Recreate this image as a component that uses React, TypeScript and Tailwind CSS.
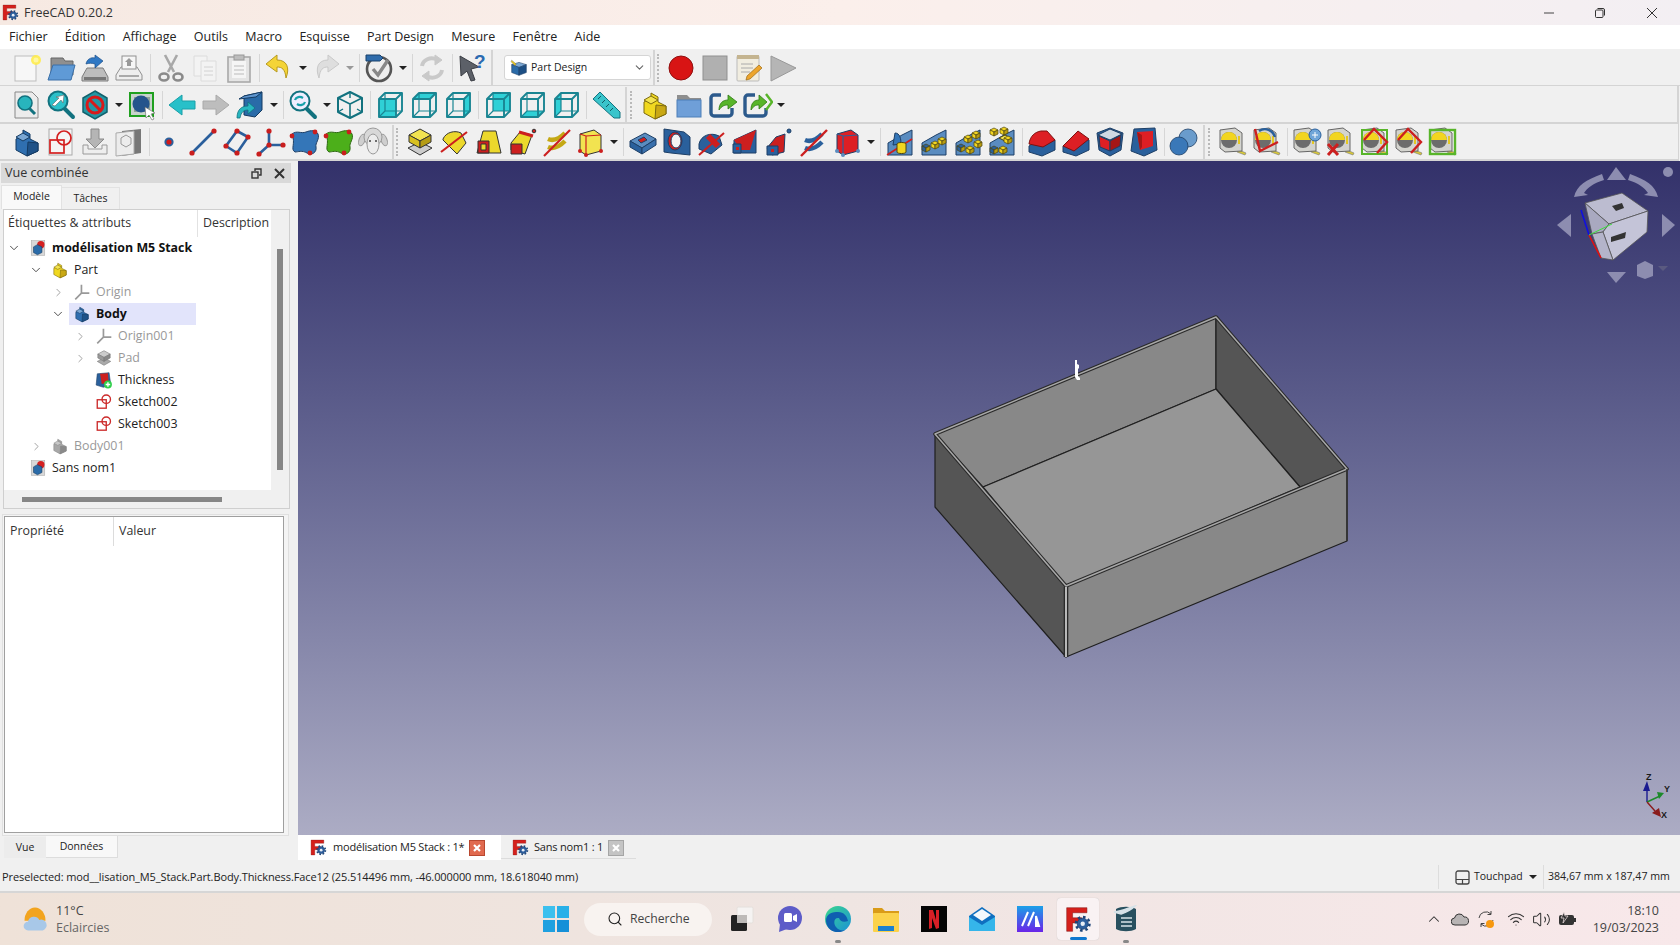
import type { ReactNode } from 'react';
import { ChevronDown, ChevronRight, ChevronUp, Search, Volume2, Wifi } from 'lucide-react';

const step = (a: string, b: string, c: string, s: string) => (
  <g stroke={s} strokeWidth="1" strokeLinejoin="round">
    <polygon points="5,13 12,9 12,4 19,8 19,13 27,17 27,25 16,30 5,24" fill={b} />
    <polygon points="12,4 19,8 12,12 5,8" fill={a} transform="translate(0 3)" />
    <polygon points="17,16 27,17 27,25 16,30" fill={c} />
  </g>
);

const wire = (face: string) => {
  const faces: Record<string, string> = {
    front: '5,10 22,10 22,28 5,28',
    top: '5,10 11,4 28,4 22,10',
    right: '22,10 28,4 28,22 22,28',
    rear: '11,4 28,4 28,22 11,22',
    bottom: '5,28 11,22 28,22 22,28',
    left: '5,10 11,4 11,22 5,28',
  };
  return (
    <g fill="none" stroke="#1a8592" strokeWidth="1.9" strokeLinejoin="round">
      {faces[face] && <polygon points={faces[face]} fill="#2fd0d6" stroke="none" />}
      <polygon points="5,10 11,4 28,4 28,22 22,28 5,28" />
      <path d="M5 10H22V28M22 10L28 4" />
      <path d="M11 4V22H28M11 22L5 28" strokeWidth="1.2" />
    </g>
  );
};

const tape = (extra?: ReactNode) => (
  <g>
    <path d="M22 24l7 3-1 2-8-3z" fill="#d8c838" stroke="#777" strokeWidth=".6" />
    <polygon points="3,4 18,2 25,7 25,25 8,26 3,22" fill="#d4d4cf" stroke="#666" />
    <circle cx="12" cy="14" r="8" fill="#6c6c6c" />
    <path d="M4 14a8 8 0 0 1 16 0z" fill="#f2d520" />
    <rect x="21" y="10" width="2" height="8" fill="#e5c820" />
    {extra}
  </g>
);

const magnifier = (fill: string, inner?: ReactNode) => (
  <g>
    <path d="M19 19l9 9" stroke="#12727f" strokeWidth="4" strokeLinecap="round" />
    <circle cx="13" cy="12" r="9.5" fill={fill} stroke="#12727f" strokeWidth="2" />
    {inner}
  </g>
);

const sketchShape = (
  <g fill="none" stroke="#cc2a2a" strokeWidth="2.4">
    <rect x="4" y="12" width="16" height="15" fill="#fff" />
    <circle cx="20" cy="11" r="7.5" />
  </g>
);

const docIcon = (
  <g>
    <rect x="4" y="3" width="24" height="26" fill="#d8d8d8" stroke="#aaa" />
    <circle cx="21" cy="10" r="6.5" fill="#d42020" />
    <polygon points="15,10 23,14 23,24 15,28 8,24 8,14" fill="#2a6ba8" stroke="#163a5f" />
  </g>
);

const bluePat = (inner: ReactNode) => (
  <g>
    <polygon points="4,29 4,17 18,9 28,4 28,29" fill="#5a8cc0" stroke="#1d3f66" />
    {inner}
  </g>
);

const yc = (x: number, y: number, c = '#f2d520') => (
  <g transform={`translate(${x} ${y})`} stroke="#4a4410" strokeWidth=".7">
    <polygon points="0,2 4,0 8,2 4,4" fill={c} />
    <polygon points="0,2 4,4 4,8 0,6" fill={c} />
    <polygon points="8,2 4,4 4,8 8,6" fill="#b89c10" />
  </g>
);

const redBlue = (inner: ReactNode) => (
  <g stroke="#1d3f66" strokeLinejoin="round">
    <polygon points="3,20 18,10 29,14 29,24 16,30 3,26" fill="#2a609c" />
    {inner}
  </g>
);

const icons: Record<string, ReactNode> = {
  new: (
    <g>
      <rect x="4" y="4" width="21" height="25" fill="#f7f7f7" stroke="#bdbdbd" />
      <circle cx="25" cy="8" r="5" fill="#ffec4d" opacity=".9" />
      <circle cx="25" cy="8" r="2.5" fill="#fff7a0" />
    </g>
  ),
  open: (
    <g>
      <path d="M6 6h12l2 3h8v14H6z" fill="#8f8f8f" stroke="#666" />
      <polygon points="8,13 30,13 26,28 3,28" fill="#5f9ad6" stroke="#3a6fa8" />
    </g>
  ),
  save: (
    <g>
      <polygon points="8,16 24,16 29,25 29,29 3,29 3,25" fill="#bdbdbd" stroke="#7d7d7d" />
      <rect x="5" y="25" width="22" height="3" fill="#777" />
      <path d="M7 12c1-5 5-7 9-6V3l8 6-8 7v-4c-3-1-6-1-9 0z" fill="#2f78c4" stroke="#1d4f88" strokeWidth=".7" />
    </g>
  ),
  print: (
    <g stroke="#909090" fill="#eee">
      <polygon points="8,15 24,15 29,23 29,28 3,28 3,23" />
      <rect x="9" y="4" width="14" height="13" fill="#f6f6f6" />
      <rect x="6" y="23" width="20" height="2" fill="#aaa" stroke="none" />
      <path d="M16 6l4 4h-2v4h-4v-4h-2z" fill="#999" stroke="none" />
    </g>
  ),
  cut: (
    <g fill="none" stroke="#a8a8a8" strokeWidth="2.6">
      <path d="M10 3l9 17M22 3l-9 17" />
      <ellipse cx="9" cy="25" rx="4.5" ry="3.5" stroke="#8a8a8a" />
      <ellipse cx="23" cy="25" rx="4.5" ry="3.5" stroke="#8a8a8a" />
    </g>
  ),
  copy: (
    <g fill="#f3f3f3" stroke="#dcdcdc">
      <path d="M5 4h13v20H5z" />
      <path d="M12 9h15v20H12z" />
      <path d="M15 15h9M15 19h9M15 23h9" stroke="#d2d2d2" />
    </g>
  ),
  paste: (
    <g>
      <rect x="5" y="5" width="22" height="25" fill="#e4e4e4" stroke="#a9a9a9" strokeWidth="1.6" />
      <rect x="9" y="9" width="14" height="17" fill="#f5f5f5" />
      <rect x="11" y="3" width="10" height="5" fill="#bdbdbd" stroke="#999" />
      <path d="M11 14h10M11 18h10M11 22h10" stroke="#bbb" />
    </g>
  ),
  undo: <path d="M14 3L3 12l11 8v-5c5 0 8 2 9 11 4-10 1-18-9-18z" fill="#f4d437" stroke="#b79a20" strokeLinejoin="round" />,
  redo: <path d="M18 3l11 9-11 8v-5c-5 0-8 2-9 11-4-10-1-18 9-18z" fill="#dedede" stroke="#c9c9c9" strokeLinejoin="round" />,
  check: (
    <g>
      <circle cx="16" cy="17" r="12" fill="#eee" stroke="#555" strokeWidth="2.6" />
      <path d="M10 17l5 6 10-15" fill="none" stroke="#888" strokeWidth="3.4" />
      <path d="M3 3h14l3 3-3 3H3z" fill="#2f6cab" stroke="#19406b" />
    </g>
  ),
  refresh: (
    <g fill="none" stroke="#c9c9c9" strokeWidth="4">
      <path d="M6 14c1-6 8-10 16-6" />
      <path d="M26 18c-1 6-8 10-16 6" />
      <path d="M19 3l7 5-7 5z" fill="#c9c9c9" strokeWidth="1" />
      <path d="M13 19l-7 5 7 5z" fill="#c9c9c9" strokeWidth="1" />
    </g>
  ),
  help: (
    <g>
      <polygon points="4,4 23,15 15,17 19,28 15,29 11,19 5,24" fill="#5c6068" stroke="#3a3d44" />
      <text x="18" y="16" fontSize="19" fontWeight="700" fill="#2b6ab0" fontFamily="Liberation Sans">?</text>
    </g>
  ),
  pd: (
    <g>
      <polygon points="16,6 29,10 16,15 3,10" fill="#7aa7d4" stroke="#1d3f66" />
      <polygon points="3,10 16,15 16,29 3,24" fill="#2a6ba8" stroke="#1d3f66" />
      <polygon points="29,10 16,15 16,29 29,24" fill="#1d4f84" stroke="#1d3f66" />
      <path d="M3 2l8 7-2 3-7-7z" fill="#e8c820" stroke="#555" strokeWidth=".6" />
    </g>
  ),
  rec: <circle cx="16" cy="16" r="12" fill="#d81414" stroke="#8f1010" />,
  stop: <rect x="4" y="4" width="24" height="24" fill="#b0b0b0" stroke="#8f8f8f" />,
  note: (
    <g>
      <rect x="4" y="4" width="22" height="25" rx="1" fill="#f1ede0" stroke="#bbb" />
      <rect x="4" y="3" width="22" height="4" fill="#c4b490" />
      <path d="M8 12h12M8 16h12M8 20h9" stroke="#aaa" />
      <path d="M14 24l12-11 3 3-12 11-4 1z" fill="#eda52c" stroke="#9c6a14" strokeWidth=".7" />
    </g>
  ),
  play: <polygon points="4,4 29,16 4,29" fill="#b5b5b5" stroke="#999" />,
  fitall: (
    <g>
      <path d="M4 3h17l6 6v20H4z" fill="#ececec" stroke="#888" />
      <circle cx="14" cy="14" r="7" fill="#28b4bd" stroke="#12727f" strokeWidth="1.6" />
      <path d="M18 19l6 6" stroke="#12727f" strokeWidth="3" />
    </g>
  ),
  fitsel: magnifier('#2bc0c9', <path d="M7 16l7-7-3-1 8-2-1 8-2-3-6 6z" fill="#fff" stroke="#666" strokeWidth=".6" />),
  draw: (
    <g>
      <polygon points="16,2 28,9 28,23 16,30 4,23 4,9" fill="#2497a4" stroke="#12626d" strokeWidth="1.5" />
      <circle cx="16" cy="16" r="8" fill="none" stroke="#d81a1a" strokeWidth="3" />
      <path d="M10 10l12 12" stroke="#d81a1a" strokeWidth="3" />
    </g>
  ),
  boxsel: (
    <g>
      <rect x="4" y="4" width="23" height="23" fill="#c8d4cc" stroke="#1fa01f" strokeWidth="2" />
      <polygon points="8,8 24,8 24,23 8,23" fill="#8fa098" />
      <circle cx="15" cy="15" r="8.5" fill="#25548c" />
      <path d="M19 18l10 6-4 1 3 5-2 1-3-5-3 3z" fill="#fff" stroke="#666" strokeWidth=".6" />
    </g>
  ),
  left: <polygon points="3,16 16,6 16,12 29,12 29,20 16,20 16,26" fill="#28c0c9" stroke="#1aa0a8" />,
  right: <polygon points="29,16 16,6 16,12 3,12 3,20 16,20 16,26" fill="#bdbdbd" stroke="#aaa" />,
  boxarrow: (
    <g>
      <polygon points="10,7 28,3 28,21 21,28 10,26" fill="#2a6ba8" stroke="#153b62" />
      <polygon points="10,7 28,3 22,8 5,10" fill="#5f96cf" stroke="#153b62" />
      <path d="M3 29c0-9 5-12 11-12v-4l7 6-7 6v-4c-4 0-7 2-8 8z" fill="#27b6c0" stroke="#12727f" strokeWidth=".8" />
    </g>
  ),
  zoomsync: magnifier('#eef', <g fill="none" stroke="#16a0aa" strokeWidth="2.2"><path d="M8 11c1-3 5-4 8-2" /><path d="M18 13c-1 3-5 4-8 2" /></g>),
  iso: (
    <g fill="none" stroke="#12727f" strokeWidth="2" strokeLinejoin="round">
      <polygon points="16,3 28,9 28,23 16,29 4,23 4,9" />
      <path d="M4 9l12 6 12-6M16 15v14" strokeWidth="1.6" />
      <path d="M16 3v6M4 23l5-3M28 23l-5-3" strokeWidth="1.4" />
    </g>
  ),
  vfront: wire('front'),
  vtop: wire('top'),
  vright: wire('right'),
  vrear: wire('rear'),
  vbottom: wire('bottom'),
  vleft: wire('left'),
  ruler: (
    <g>
      <polygon points="3,10 10,3 30,23 30,29 24,29" fill="#39c4cb" stroke="#12727f" />
      <path d="M8 10l3-3M12 14l3-3M16 18l3-3M20 22l3-3" stroke="#0f5c66" />
    </g>
  ),
  part: step('#f2e350', '#f0d820', '#c9a814', '#7c6a10'),
  folder: (
    <g>
      <path d="M4 6h10l3 3h11v4H4z" fill="#8e8e8e" />
      <rect x="4" y="11" width="24" height="17" fill="#6f9fd8" stroke="#4d7fb8" />
    </g>
  ),
  link: (
    <g>
      <path d="M14 6H7a3 3 0 0 0-3 3v15a3 3 0 0 0 3 3h15a3 3 0 0 0 3-3v-5" fill="none" stroke="#2c5a8c" strokeWidth="3.4" />
      <path d="M12 21c0-7 4-10 9-10V6l9 7-9 7v-4c-4 0-6 1-9 5z" fill="#58b52a" stroke="#2f7a12" strokeWidth=".8" />
    </g>
  ),
  linkmore: (
    <g>
      <path d="M14 6H7a3 3 0 0 0-3 3v15a3 3 0 0 0 3 3h15a3 3 0 0 0 3-3v-5" fill="none" stroke="#2c5a8c" strokeWidth="3.4" />
      <path d="M10 21c0-7 3-10 8-10V6l8 7-8 7v-4c-4 0-5 1-8 5z" fill="#58b52a" stroke="#2f7a12" strokeWidth=".8" />
      <path d="M25 5l6 8-6 8" fill="none" stroke="#58b52a" strokeWidth="2.4" />
    </g>
  ),
  body: step('#7aa7d4', '#2f6fb0', '#1f5288', '#153b62'),
  bodygrey: step('#c8c8c8', '#a8a8a8', '#8a8a8a', '#888'),
  sketch: (
    <g>
      <rect x="4" y="3" width="23" height="26" fill="#f5f5f5" stroke="#aaa" />
      <g fill="none" stroke="#d42020" strokeWidth="1.7">
        <rect x="5" y="14" width="14" height="13" />
        <circle cx="19" cy="12" r="7" />
      </g>
    </g>
  ),
  sketchT: sketchShape,
  import: (
    <g>
      <path d="M4 19v9h24v-9h-5v4H9v-4z" fill="#eee" stroke="#999" />
      <path d="M12 3h8v10h5l-9 9-9-9h5z" fill="#b5b5b5" stroke="#8a8a8a" />
    </g>
  ),
  clonegrey: (
    <g>
      <polygon points="9,5 28,3 28,27 9,30" fill="#777" />
      <polygon points="3,7 21,5 21,28 3,30" fill="#ececec" stroke="#aaa" />
      <path d="M8 12l5-3 5 3v6l-5 3-5-3z" fill="none" stroke="#999" />
    </g>
  ),
  point: <circle cx="16" cy="16" r="3.6" fill="#d11a1a" stroke="#2a609c" strokeWidth="2" />,
  line: (
    <g>
      <path d="M5 27L27 5" stroke="#2a5f9c" strokeWidth="2.6" />
      <circle cx="5" cy="27" r="2.6" fill="#c91e1e" />
      <circle cx="27" cy="5" r="2.6" fill="#c91e1e" />
    </g>
  ),
  plane: (
    <g>
      <polygon points="16,5 27,11 16,27 5,20" fill="none" stroke="#2a5f9c" strokeWidth="2.6" />
      <circle cx="16" cy="5" r="2.6" fill="#c91e1e" />
      <circle cx="27" cy="11" r="2.6" fill="#c91e1e" />
      <circle cx="16" cy="27" r="2.6" fill="#c91e1e" />
      <circle cx="5" cy="20" r="2.6" fill="#c91e1e" />
    </g>
  ),
  lcs: (
    <g>
      <path d="M14 5v14M14 19H27M14 19L4 28" stroke="#2a5f9c" strokeWidth="2.6" />
      <circle cx="14" cy="5" r="2.6" fill="#c91e1e" />
      <circle cx="28" cy="19" r="2.6" fill="#c91e1e" />
      <circle cx="4" cy="28" r="2.6" fill="#c91e1e" />
      <circle cx="14" cy="19" r="2.6" fill="#c91e1e" />
    </g>
  ),
  binder: (
    <g>
      <path d="M3 8c5-4 9 0 14-2 5-2 10-2 12 2 2 5-3 9-2 13 1 5-4 9-9 6-5-3-9-1-12-1-5-3 1-8-3-18z" fill="#3476b8" stroke="#1d3f66" />
      <circle cx="26" cy="6" r="2.4" fill="#c91e1e" />
      <circle cx="3" cy="10" r="2.4" fill="#c91e1e" />
      <circle cx="21" cy="27" r="2.4" fill="#c91e1e" />
    </g>
  ),
  subshape: (
    <g>
      <path d="M3 8c5-4 9 0 14-2 5-2 10-2 12 2 2 5-3 9-2 13 1 5-4 9-9 6-5-3-9-1-12-1-5-3 1-8-3-18z" fill="#4caf1a" stroke="#2c6a10" />
      <circle cx="26" cy="6" r="2.4" fill="#c91e1e" />
      <circle cx="3" cy="10" r="2.4" fill="#c91e1e" />
      <circle cx="21" cy="27" r="2.4" fill="#c91e1e" />
    </g>
  ),
  sheep: (
    <g stroke="#9a9a9a">
      <ellipse cx="5" cy="14" rx="3" ry="6" fill="#cfcfcf" transform="rotate(20 5 14)" />
      <ellipse cx="27" cy="14" rx="3" ry="6" fill="#cfcfcf" transform="rotate(-20 27 14)" />
      <circle cx="16" cy="11" r="9" fill="#d8d8d8" />
      <ellipse cx="16" cy="18" rx="6" ry="10" fill="#ececec" />
      <circle cx="13" cy="15" r="1" fill="#444" stroke="none" />
      <circle cx="19" cy="15" r="1" fill="#444" stroke="none" />
    </g>
  ),
  pad: (
    <g stroke="#333" strokeLinejoin="round">
      <polygon points="4,22 16,16 28,22 16,29" fill="#ccc" />
      <polygon points="5,9 16,3 27,9 16,15" fill="#f2e350" />
      <polygon points="5,9 16,15 16,22 5,16" fill="#d8c020" />
      <polygon points="27,9 16,15 16,22 27,16" fill="#b59c14" />
    </g>
  ),
  padgrey: (
    <g stroke="#777" strokeLinejoin="round">
      <polygon points="4,22 16,16 28,22 16,29" fill="#aaa" />
      <polygon points="5,9 16,3 27,9 16,15" fill="#ccc" />
      <polygon points="5,9 16,15 16,22 5,16" fill="#999" />
      <polygon points="27,9 16,15 16,22 27,16" fill="#888" />
    </g>
  ),
  revolve: (
    <g>
      <path d="M5 13c3-7 12-9 18-6l5 10-9 11-14-14z" fill="#ecd82c" stroke="#333" />
      <path d="M3 26L29 6" stroke="#cc1f1f" strokeWidth="2.2" />
    </g>
  ),
  loft: (
    <g stroke="#333" strokeLinejoin="round">
      <polygon points="11,5 24,5 29,27 5,27" fill="#ecd82c" />
      <rect x="6" y="15" width="11" height="12" fill="#cc1f1f" />
      <rect x="9" y="18" width="5" height="6" fill="#ecd82c" />
    </g>
  ),
  pipe: (
    <g stroke="#333" strokeLinejoin="round">
      <path d="M5 17l9-11 12 3-7 19-14-4z" fill="#ecd82c" />
      <path d="M13 6l14 4" stroke="#cc1f1f" strokeWidth="3" />
      <rect x="5" y="18" width="11" height="10" fill="#cc1f1f" />
      <circle cx="28" cy="5" r="1.8" fill="#cc1f1f" />
    </g>
  ),
  helix: (
    <g>
      <g fill="none" stroke="#c4a814" strokeWidth="4.5">
        <path d="M8 21c7 3 13-2 17-6" />
        <path d="M8 13c7 3 13-2 17-6" />
      </g>
      <path d="M4 30L30 4" stroke="#cc1f1f" strokeWidth="2.2" />
    </g>
  ),
  prim: (
    <g stroke="#333" strokeLinejoin="round">
      <polygon points="6,8 20,4 27,9 27,25 12,29 6,25" fill="#f2e350" />
      <path d="M12 10v19M12 10l15-1M12 10L6 8" stroke="#cc1f1f" strokeWidth="1.2" />
      <circle cx="12" cy="29" r="2" fill="#cc1f1f" stroke="none" />
      <circle cx="27" cy="25" r="2" fill="#cc1f1f" stroke="none" />
      <circle cx="6" cy="25" r="2" fill="#cc1f1f" stroke="none" />
    </g>
  ),
  pocket: (
    <g stroke="#1d3f66" strokeLinejoin="round">
      <polygon points="3,15 18,7 29,13 15,22" fill="#5a8cc0" />
      <polygon points="3,15 15,22 15,28 3,21" fill="#2a609c" />
      <polygon points="29,13 15,22 15,28 29,19" fill="#3a70ac" />
      <polygon points="11,14 17,11 20,14 14,17" fill="#cc1f1f" />
    </g>
  ),
  hole: (
    <g stroke="#1d3f66" strokeLinejoin="round">
      <polygon points="3,3 23,6 29,11 29,29 10,27 3,26" fill="#2a609c" />
      <ellipse cx="14" cy="15" rx="7" ry="9" fill="#cc1f1f" />
      <ellipse cx="15" cy="15" rx="5" ry="7" fill="#f4f4f4" />
    </g>
  ),
  groove: (
    <g>
      <path d="M4 18c2-9 12-12 20-8l3 9-11 9-12-5z" fill="#2a609c" stroke="#1d3f66" />
      <path d="M13 10l10 10" stroke="#cc1f1f" strokeWidth="6" />
      <path d="M4 29L29 7" stroke="#cc1f1f" strokeWidth="2" />
    </g>
  ),
  sloft: (
    <g stroke="#1d3f66" strokeLinejoin="round">
      <polygon points="5,14 27,4 27,27 5,27" fill="#2a609c" />
      <polygon points="5,14 27,4 21,24 12,24" fill="#cc1f1f" stroke="none" />
      <rect x="4" y="18" width="8" height="9" fill="#2a609c" />
      <rect x="7" y="21" width="3" height="3" fill="#cc1f1f" stroke="none" />
    </g>
  ),
  spipe: (
    <g stroke="#1d3f66" strokeLinejoin="round">
      <path d="M4 22l9-11 9-3-1 18-12 3z" fill="#cc1f1f" />
      <rect x="4" y="20" width="11" height="9" fill="#2a609c" />
      <rect x="8" y="23" width="3" height="3" fill="#cc1f1f" stroke="none" />
      <circle cx="26" cy="5" r="2" fill="#2a609c" />
    </g>
  ),
  shelix: (
    <g>
      <g fill="none" stroke="#2a609c" strokeWidth="4.5">
        <path d="M8 22c7 3 13-2 17-6" />
        <path d="M8 14c7 3 13-2 17-6" />
      </g>
      <path d="M4 30L30 4" stroke="#cc1f1f" strokeWidth="2.4" />
    </g>
  ),
  sprim: (
    <g stroke="#1d3f66" strokeLinejoin="round">
      <polygon points="6,8 20,4 27,9 27,25 12,29 6,25" fill="#dd1f24" />
      <path d="M12 10v19M12 10l15-1M12 10L6 8" stroke="#2a609c" strokeWidth="1.2" />
      <circle cx="12" cy="29" r="2" fill="#5a8cc0" stroke="none" />
      <circle cx="27" cy="25" r="2" fill="#5a8cc0" stroke="none" />
      <circle cx="6" cy="25" r="2" fill="#5a8cc0" stroke="none" />
    </g>
  ),
  mirror: bluePat(
    <g>
      <path d="M11 7c5 0 6 6 6 11l-8 1z" fill="#3476b8" stroke="#1d3f66" />
      <path d="M3 29L28 13" stroke="#cc1f1f" strokeWidth="1.6" />
      <path d="M13 18c0-2 9-2 9 0v8c0 2-9 2-9 0z" fill="#f2d520" stroke="#4a4410" />
    </g>
  ),
  linear: bluePat(
    <g>
      {yc(4, 18, '#2a609c')}
      {yc(13, 15)}
      {yc(20, 11)}
    </g>
  ),
  polar: bluePat(
    <g>
      {yc(5, 18, '#2a609c')}
      {yc(12, 9)}
      {yc(20, 5)}
      {yc(22, 14)}
      {yc(14, 20)}
    </g>
  ),
  multi: bluePat(
    <g>
      {yc(4, 20, '#2a609c')}
      <polygon points="13,12 19,9 25,12 19,15" fill="#f2e350" stroke="#4a4410" />
      {yc(4, 2)}
      {yc(14, 1)}
      {yc(18, 10)}
      {yc(13, 20)}
    </g>
  ),
  fillet: redBlue(<path d="M3 18c1-8 6-12 12-13h6l8 9-12 7z" fill="#dd1f24" stroke="#7d1010" />),
  chamfer: redBlue(<polygon points="3,20 18,5 29,13 14,25" fill="#dd1f24" stroke="#7d1010" />),
  draft: (
    <g stroke="#1d3f66" strokeLinejoin="round">
      <polygon points="16,2 29,7 27,24 16,30 5,24 3,7" fill="#2a609c" />
      <polygon points="4,9 16,14 28,8 16,3" fill="#cfd8e4" />
      <polygon points="5,10 16,15 16,25 6,21" fill="#dd1f24" />
      <polygon points="27,9 16,15 16,25 26,20" fill="#a51616" />
    </g>
  ),
  thick: (
    <g stroke="#1d3f66" strokeLinejoin="round">
      <polygon points="6,3 27,2 29,24 16,30 3,25" fill="#2a609c" />
      <polygon points="9,6 25,5 25,20 12,24" fill="#dd1f24" stroke="none" />
      <polygon points="9,6 14,9 14,21 12,24" fill="#a51616" stroke="none" />
    </g>
  ),
  boolean: (
    <g stroke="#1d3f66" strokeWidth=".8">
      <circle cx="20" cy="12" r="9" fill="#6a9ccc" />
      <circle cx="11" cy="20" r="9" fill="#3a78b8" />
    </g>
  ),
  t1: tape(),
  t2: tape(
    <g fill="none" strokeWidth="2.4">
      <path d="M4 3l5 22 18-9" stroke="#cc1f1f" />
      <path d="M8 5c6-4 14-1 16 6" stroke="#2a609c" />
    </g>,
  ),
  t3: tape(
    <g>
      <circle cx="24" cy="9" r="6" fill="#6fa5d8" stroke="#2a609c" />
      <path d="M21 9h6M24 6v6" stroke="#fff" />
    </g>,
  ),
  t4: tape(<path d="M3 18l10 11M13 18L3 29" stroke="#cc1f1f" strokeWidth="3" />),
  t5: tape(
    <g fill="none">
      <rect x="3" y="4" width="25" height="24" stroke="#58b52a" strokeWidth="2" />
      <path d="M5 14L15 3l13 13-10 11" stroke="#cc1f1f" strokeWidth="2.4" />
    </g>,
  ),
  t6: tape(<path d="M5 14L15 3l13 13-10 11" fill="none" stroke="#cc1f1f" strokeWidth="2.4" />),
  t7: tape(<rect x="3" y="4" width="25" height="24" fill="none" stroke="#58b52a" strokeWidth="2.4" />),
  doc: docIcon,
  origin: <path d="M15 3v15M15 18h14M15 18L4 29" fill="none" stroke="#999" strokeWidth="3" />,
  thickness: (
    <g>
      <polygon points="4,5 25,3 28,24 15,29 2,25" fill="#2a609c" stroke="#1d3f66" />
      <polygon points="9,5 23,4 24,20 12,23" fill="#cc1f1f" />
      <circle cx="23" cy="24" r="7" fill="#2fd04a" />
      <path d="M23 20v8M19 24h8" stroke="#fff" strokeWidth="2.4" />
    </g>
  ),
};

function Ic({ n, s = 32 }: { n: string; s?: number }) {
  return (
    <svg width={s} height={s} viewBox="0 0 32 32" className="shrink-0" aria-hidden>
      {icons[n]}
    </svg>
  );
}

function ToolItems({ items }: { items: string[] }) {
  return (
    <>
      {items.map((it, i) => {
        if (it === '|' || it === '|+') {
          return (
            <div key={i} className={it === '|' ? 'w-[6px] h-full flex items-center justify-center' : 'w-[8px] h-full flex items-center justify-center'}>
              <div className="w-px h-[28px] bg-[#d6d6d6]" />
            </div>
          );
        }
        if (it === 'E') {
          return (
            <div key={i} className="w-[5px] self-stretch flex justify-center">
              <div className="w-[2px] h-full bg-[#d4d4d4]" />
            </div>
          );
        }
        if (it === 'H' || it === 'Hw') {
          return (
            <div key={i} className={it === 'H' ? 'w-[8px] flex items-center pl-[1px]' : 'w-[10px] flex items-center pl-[2px]'}>
              <div className="h-[28px] border-l-2 border-dotted border-[#b9b9b9]" />
            </div>
          );
        }
        if (it === 'v' || it === 'w') {
          return (
            <div key={i} className="w-[13px] flex justify-center">
              <div className={it === 'v' ? 'w-0 h-0 border-x-[4px] border-x-transparent border-t-[4px] border-t-[#222]' : 'w-0 h-0 border-x-[4px] border-x-transparent border-t-[4px] border-t-[#999]'} />
            </div>
          );
        }
        return (
          <div key={i} className="w-[34px] flex justify-center">
            <Ic n={it} />
          </div>
        );
      })}
    </>
  );
}

const row1a = ['new', 'open', 'save', 'print', '|+', 'cut', 'copy', 'paste', '|', 'undo', 'v', 'redo', 'w', '|', 'check', 'v', '|', 'refresh', '|', 'help', 'E'];
const row1b = ['E', 'H', 'rec', 'stop', 'note', 'play'];
const row2 = ['fitall', 'fitsel', 'draw', 'v', 'boxsel', '|', 'left', 'right', 'boxarrow', 'v', '|', 'zoomsync', 'v', 'iso', '|', 'vfront', 'vtop', 'vright', '|', 'vrear', 'vbottom', 'vleft', '|', 'ruler', 'E', 'Hw', 'part', 'folder', 'link', 'linkmore', 'v'];
const row3 = [
  'body', 'sketch', 'import', 'clonegrey', '|', 'point', 'line', 'plane', 'lcs', 'binder', 'subshape', 'sheep', 'E', 'H',
  'pad', 'revolve', 'loft', 'pipe', 'helix', 'prim', 'v', '|', 'pocket', 'hole', 'groove', 'sloft', 'spipe', 'shelix', 'sprim', 'v', '|',
  'mirror', 'linear', 'polar', 'multi', '|', 'fillet', 'chamfer', 'draft', 'thick', '|', 'boolean', 'E', 'Hw',
  't1', 't2', '|', 't3', 't4', 't5', 't6', 't7',
];

const menus = ['Fichier', 'Édition', 'Affichage', 'Outils', 'Macro', 'Esquisse', 'Part Design', 'Mesure', 'Fenêtre', 'Aide'];

const tree = [
  { level: 0, arrow: 'down', icon: 'doc', label: 'modélisation M5 Stack', bold: true },
  { level: 1, arrow: 'down', icon: 'part', label: 'Part' },
  { level: 2, arrow: 'right', icon: 'origin', label: 'Origin', grey: true },
  { level: 2, arrow: 'down', icon: 'body', label: 'Body', bold: true, selected: true },
  { level: 3, arrow: 'right', icon: 'origin', label: 'Origin001', grey: true },
  { level: 3, arrow: 'right', icon: 'padgrey', label: 'Pad', grey: true },
  { level: 3, icon: 'thickness', label: 'Thickness' },
  { level: 3, icon: 'sketchT', label: 'Sketch002' },
  { level: 3, icon: 'sketchT', label: 'Sketch003' },
  { level: 1, arrow: 'right', icon: 'bodygrey', label: 'Body001', grey: true },
  { level: 0, icon: 'doc', label: 'Sans nom1' },
];

function Logo({ s = 17 }: { s?: number }) {
  return (
    <svg width={s} height={s} viewBox="0 0 32 32" className="shrink-0" aria-hidden>
      <path d="M2 2h24v6H9v6h11v6H9v10H2z" fill="#d5201c" stroke="#7d1210" strokeWidth=".6" />
      <circle cx="21" cy="21" r="6.5" fill="#2d5f9e" stroke="#1d4478" strokeWidth="1" />
      <circle cx="21" cy="21" r="8" fill="none" stroke="#1d4478" strokeWidth="3" strokeDasharray="3 3.3" />
      <circle cx="21" cy="21" r="2.6" fill="#e8edf5" />
    </svg>
  );
}

function CloseX({ active }: { active?: boolean }) {
  return (
    <div className={active ? 'w-[16px] h-[16px] bg-[#e0694e] border border-[#b9472f] flex items-center justify-center' : 'w-[16px] h-[16px] bg-[#c4c4c4] border border-[#a5a5a5] flex items-center justify-center'}>
      <svg width="10" height="10" viewBox="0 0 10 10" aria-hidden>
        <path d="M2 2l6 6M8 2L2 8" stroke="#fff" strokeWidth="2.2" />
      </svg>
    </div>
  );
}

function Scene() {
  return (
    <svg className="absolute inset-0 w-full h-full" viewBox="298 161 1382 674" aria-hidden>
      <g stroke="#1f1f1f" strokeWidth="1.2" strokeLinejoin="round">
        <polygon points="935,434 1216,317 1216,389 983,487" fill="#888888" />
        <polygon points="1216,317 1347,469 1300,487 1216,389" fill="#555555" />
        <polygon points="983,487 1216,389 1300,487 1066,586" fill="#969696" />
        <polygon points="935,434 1066,586 1066,657 935,507" fill="#555555" />
        <polygon points="1066,586 1347,469 1347,541 1066,657" fill="#888888" />
      </g>
      <g fill="none" strokeLinejoin="round">
        <path d="M935 434L1216 317L1347 469L1066 586Z" stroke="#2a2a2a" strokeWidth="3.6" />
        <path d="M935 434L1216 317L1347 469L1066 586Z" stroke="#a8a8a8" strokeWidth="1.5" />
        <path d="M1066 587V657" stroke="#2a2a2a" strokeWidth="4.6" />
        <path d="M1066 587V657" stroke="#b8b8b8" strokeWidth="2" />
        <path d="M1347 469V541" stroke="#333" strokeWidth="1.6" />
      </g>
      <path d="M1075 360l2 0 0 4 2 1 0 3-1 1 0 7 2 2 0 2-3 0-2-3z" fill="#fff" />
      <g fill="#8d8db0">
        <polygon points="1607,180 1616,167 1626,180" />
        <polygon points="1557,225 1571,214 1571,237" />
        <polygon points="1662,214 1675,225 1662,237" />
        <polygon points="1607,272 1626,272 1616,283" />
        <circle cx="1668" cy="172" r="5" />
        <path d="M1574 197c3-12 12-17 28-23l2 6c-10 3-17 8-20 13l4 2z" />
        <path d="M1658 197c-3-12-12-17-28-23l-2 6c10 3 17 8 20 13l-4 2z" />
        <polygon points="1645,261 1637,265 1637,276 1645,279 1653,276 1653,265" />
        <polygon points="1658,266 1668,266 1663,271" fill="#5a5a80" />
      </g>
      <g stroke="#555" strokeWidth=".8" strokeLinejoin="round">
        <polygon points="1585,203 1622,193 1648,211 1609,224" fill="#bcbcd0" />
        <polygon points="1585,203 1609,224 1603,232 1592,234" fill="#a9a9c0" />
        <polygon points="1609,224 1648,211 1647,232 1613,260 1603,232" fill="#c4c4d8" />
        <polygon points="1592,234 1603,232 1613,260 1601,258" fill="#b4b4ca" />
      </g>
      <path d="M1611 237l15-5-1 6-14 4z" fill="#333" />
      <path d="M1612 206l10-3 2 5-8 3z" fill="#333" />
      <path d="M1581 210L1589 235" stroke="#1010e0" strokeWidth="1.6" />
      <path d="M1589 235L1601 258" stroke="#e01010" strokeWidth="1.6" />
      <path d="M1589 235L1612 224" stroke="#40e040" strokeWidth="1" />
      <path d="M1647 802V786" stroke="#1a1a90" strokeWidth="1.4" />
      <polygon points="1643,791 1647,781 1650,791" fill="#1a1a90" />
      <path d="M1647 802L1660 796" stroke="#1c8a2a" strokeWidth="1.4" />
      <polygon points="1657,792 1664,793 1659,799" fill="#1c8a2a" />
      <path d="M1647 802L1655 811" stroke="#8a1c1c" strokeWidth="1.4" />
      <polygon points="1652,813 1659,808 1661,817" fill="#8a1c1c" />
      <g fontSize="9" fontWeight="700" fill="#1a1a1a" fontFamily="Liberation Sans">
        <text x="1646" y="780">Z</text>
        <text x="1664" y="792">Y</text>
        <text x="1661" y="818">X</text>
      </g>
    </svg>
  );
}

export default function App() {
  return (
    <div className="w-[1680px] h-[945px] overflow-hidden flex flex-col bg-[#f0f0f0] text-[#222] font-['Open_Sans','Noto_Sans',sans-serif]">
      <div className="h-[25px] flex items-center bg-gradient-to-r from-[#f6e9e2] via-[#fbefeb] to-[#f3eff3] pl-[2px]">
        <Logo />
        <span className="ml-[5px] pt-[1px] text-[12.5px] text-[#333]">FreeCAD 0.20.2</span>
        <div className="ml-auto flex items-center text-[#333]">
          <div className="w-[54px] flex justify-center">
            <svg width="12" height="12" viewBox="0 0 12 12" aria-hidden><path d="M1 6h10" stroke="#444" /></svg>
          </div>
          <div className="w-[48px] flex justify-center">
            <svg width="12" height="12" viewBox="0 0 12 12" aria-hidden><rect x="1.5" y="3" width="7.5" height="7.5" rx="1" fill="none" stroke="#333" /><path d="M3.5 1.5H9a1.5 1.5 0 0 1 1.5 1.5v5.5" fill="none" stroke="#333" /></svg>
          </div>
          <div className="w-[56px] flex justify-center">
            <svg width="12" height="12" viewBox="0 0 12 12" aria-hidden><path d="M1 1l10 10M11 1L1 11" stroke="#333" /></svg>
          </div>
        </div>
      </div>

      <div className="h-[24px] bg-white flex items-center pl-[9px] pt-[1px] gap-[17.3px] text-[12.5px]">
        {menus.map((m) => (
          <span key={m}>{m}</span>
        ))}
      </div>

      <div className="h-[37px] flex items-center pl-[10px] pt-[1px] border-b border-[#d4d4d4]">
        <ToolItems items={row1a} />
        <div className="ml-[10px] w-[147px] h-[25px] bg-white border border-[#d5d5d5] rounded-[3px] flex items-center pl-[5px] pr-[4px] text-[10.5px]">
          <Ic n="pd" s={18} />
          <span className="ml-[3px]">Part Design</span>
          <ChevronDown className="ml-auto text-[#666]" size={13} />
        </div>
        <ToolItems items={row1b} />
      </div>

      <div className="h-[38px] flex items-center pl-[10px] pt-[1px] border-b-2 border-[#d4d4d4] border-r-2 mr-[1px]">
        <ToolItems items={row2} />
      </div>

      <div className="h-[37px] flex items-center pl-[10px] pt-[1px] border-b-2 border-[#d4d4d4] border-r mr-[1px]">
        <ToolItems items={row3} />
      </div>

      <div className="h-[699px] flex">
        <div className="w-[298px] flex flex-col pl-[1px] pt-[2px]">
          <div className="h-[20px] w-[290px] bg-[#d9d9d9] flex items-center pl-[4px] text-[12.6px] text-[#333]">
            <span>Vue combinée</span>
            <svg className="ml-auto" width="11" height="11" viewBox="0 0 11 11" aria-hidden>
              <rect x="1" y="4" width="6" height="6" fill="none" stroke="#333" strokeWidth="1.4" />
              <path d="M4 3V1h6v6H8" fill="none" stroke="#333" strokeWidth="1.4" />
            </svg>
            <svg className="ml-[12px] mr-[6px]" width="11" height="11" viewBox="0 0 11 11" aria-hidden>
              <path d="M1 1l9 9M10 1l-9 9" stroke="#333" strokeWidth="2" />
            </svg>
          </div>

          <div className="h-[24px] mt-[2px] flex items-end text-[10.5px]">
            <div className="w-[61px] h-[24px] bg-[#f9f9f9] border-x border-t border-[#e2e2e2] flex items-center justify-center pb-[1px]">Modèle</div>
            <div className="w-[58px] h-[22px] border-r border-t border-[#e2e2e2] flex items-center justify-center">Tâches</div>
          </div>

          <div className="w-[287px] ml-[2px] h-[300px] border border-[#cfcfcf] flex flex-col bg-[#f0f0f0]">
            <div className="flex h-[280px]">
              <div className="w-[267px] bg-white flex flex-col">
                <div className="h-[27px] flex items-center text-[12.4px] text-[#333]">
                  <div className="w-[193px] pl-[4px]">Étiquettes &amp; attributs</div>
                  <div className="h-full border-l border-[#e2e2e2] pl-[5px] flex items-center">Description</div>
                </div>
                <div className="flex flex-col text-[12.4px] -ml-[3px]">
                  {tree.map((t) => (
                    <div key={t.label} className="h-[22px] flex items-center" style={{ paddingLeft: 2 + t.level * 22 }}>
                      <div className="w-[22px] flex justify-center text-[#444]">
                        {t.arrow === 'down' && <ChevronDown size={14} strokeWidth={1.6} />}
                        {t.arrow === 'right' && <ChevronRight size={13} strokeWidth={1.4} className="text-[#888]" />}
                      </div>
                      <div className={t.selected ? 'w-[127px] h-[22px] pl-[4px] flex items-center bg-[#e2e4fb]' : 'h-[22px] pl-[4px] flex items-center'}>
                        <Ic n={t.icon} s={18} />
                        <span className={t.bold ? 'ml-[5px] font-bold text-[#111] whitespace-nowrap' : t.grey ? 'ml-[5px] text-[#999] whitespace-nowrap' : 'ml-[5px] text-[#222] whitespace-nowrap'}>{t.label}</span>
                      </div>
                    </div>
                  ))}
                </div>
              </div>
              <div className="w-[18px] flex justify-center pt-[39px]">
                <div className="w-[6px] h-[221px] bg-[#868686]" />
              </div>
            </div>
            <div className="h-[18px] pl-[18px] flex items-center">
              <div className="w-[200px] h-[5px] bg-[#868686]" />
            </div>
          </div>

          <div className="w-[287px] ml-[1px] mt-[5px] h-[322px] bg-[#f4f4f4] border border-[#e0e0e0] p-[1px] pr-[4px] pb-[2px]">
            <div className="h-full bg-white border border-[#9f9f9f]">
              <div className="h-[29px] flex items-center text-[12.4px] text-[#333]">
                <div className="w-[109px] pl-[5px] h-full flex items-center border-r border-[#dcdcdc]">Propriété</div>
                <div className="pl-[5px]">Valeur</div>
              </div>
            </div>
          </div>

          <div className="flex ml-[3px] h-[23px] text-[10.5px]">
            <div className="w-[42px] h-[21px] mt-[1px] bg-[#ececec] flex items-center justify-center">Vue</div>
            <div className="w-[72px] h-[22px] bg-[#f8f8f8] border-b border-r border-[#dddddd] flex items-center justify-center">Données</div>
          </div>
        </div>

        <div className="flex-1 flex flex-col">
          <div className="relative flex-1 bg-gradient-to-b from-[#33316a] to-[#acacc4]">
            <Scene />
          </div>
          <div className="h-[25px] flex items-start text-[11px]">
            <div className="w-[203px] h-[25px] bg-white flex items-center pl-[12px] whitespace-nowrap">
              <Logo />
              <span className="ml-[6px] tracking-[-0.2px]">modélisation M5 Stack : 1*</span>
              <div className="ml-[5px]"><CloseX active /></div>
            </div>
            <div className="w-[135px] h-[22px] mt-[2px] flex items-center pl-[11px] whitespace-nowrap border-b border-[#dcdcdc]">
              <Logo />
              <span className="ml-[5px] tracking-[-0.2px]">Sans nom1 : 1</span>
              <div className="ml-[5px]"><CloseX /></div>
            </div>
          </div>
        </div>
      </div>

      <div className="h-[33px] flex items-center border-b-2 border-[#d6d6d6] text-[10.6px] pl-[2px]">
        <span className="whitespace-nowrap tracking-[-0.1px] text-[11px] pt-[3px]">Preselected: mod__lisation_M5_Stack.Part.Body.Thickness.Face12 (25.514496 mm, -46.000000 mm, 18.618040 mm)</span>
        <div className="ml-auto w-[105px] h-[24px] mt-[3px] border-l border-[#dddddd] flex items-center pl-[16px]">
          <svg width="15" height="15" viewBox="0 0 15 15" aria-hidden>
            <rect x="1" y="1" width="13" height="13" rx="2" fill="none" stroke="#444" strokeWidth="1.3" />
            <path d="M1 9.5h13M7.5 9.5V14" stroke="#444" strokeWidth="1.2" />
          </svg>
          <span className="ml-[4px] text-[10.5px]">Touchpad</span>
          <div className="ml-[6px] w-0 h-0 border-x-[4px] border-x-transparent border-t-[4px] border-t-[#222]" />
        </div>
        <div className="w-[137px] h-[24px] mt-[3px] border-l border-[#dddddd] flex items-center pl-[4px] whitespace-nowrap">384,67 mm x 187,47 mm</div>
      </div>

      <div className="flex-1 flex items-center bg-gradient-to-r from-[#efe2d8] via-[#efe5e2] to-[#f8e8ea] relative">
        <div className="flex items-center pl-[21px] w-[530px]">
          <svg width="28" height="28" viewBox="0 0 32 32" aria-hidden>
            <path d="M4 18a11 14 0 1 1 24 0z" fill="#f2a41f" />
            <path d="M8 29a5 5 0 0 1 0-10 7 7 0 0 1 13-2 6 6 0 0 1 4 12z" fill="#a8c8e8" />
          </svg>
          <div className="ml-[7px] text-[12.5px] leading-[17px] text-[#444]">
            <div>11°C</div>
            <div className="text-[#666]">Eclaircies</div>
          </div>
        </div>

        <div className="relative flex items-center">
          <div className="ml-[13px] w-[26px] h-[26px] grid grid-cols-2 gap-[2px]">
            <div className="bg-[#3cc0ee]" />
            <div className="bg-[#29b0e8]" />
            <div className="bg-[#1fa0e0]" />
            <div className="bg-[#1590d8]" />
          </div>
          <div className="ml-[15px] w-[128px] h-[33px] rounded-full bg-[#f8f3f0] flex items-center pl-[23px] text-[12.2px] text-[#444]">
            <Search size={16} strokeWidth={1.6} className="text-[#222]" />
            <span className="ml-[7px]">Recherche</span>
          </div>
          <div className="ml-[6px] flex items-center">
            <div className="w-[48px] h-[42px] flex items-center justify-center">
              <svg width="26" height="26" viewBox="0 0 26 26" aria-hidden>
                <rect x="8" y="1" width="16" height="16" rx="1.5" fill="#f5f3f2" stroke="#e4e0dc" />
                <rect x="2" y="9" width="16" height="16" rx="1.5" fill="#222" />
                <rect x="8" y="9" width="10" height="8" fill="#bdbab8" />
              </svg>
            </div>
            <div className="w-[48px] h-[42px] flex items-center justify-center">
              <svg width="26" height="30" viewBox="0 0 26 30" aria-hidden>
                <circle cx="13" cy="14" r="12" fill="#5d5cc8" />
                <path d="M3 20l-1 8 8-3z" fill="#5d5cc8" />
                <rect x="7" y="9" width="8" height="9" rx="1.5" fill="#fff" />
                <path d="M16 12l4-2v8l-4-2z" fill="#fff" />
              </svg>
            </div>
            <div className="relative w-[48px] h-[42px] flex items-center justify-center">
              <svg width="28" height="28" viewBox="0 0 28 28" aria-hidden>
                <defs>
                  <linearGradient id="edgeA" x1="0" y1="0" x2="1" y2="1">
                    <stop offset="0" stopColor="#3bd88c" />
                    <stop offset="1" stopColor="#1a90d8" />
                  </linearGradient>
                </defs>
                <circle cx="14" cy="14" r="13" fill="url(#edgeA)" />
                <path d="M2 16C2 8 9 7 14 7c6 0 9 4 10 9-5 2-8 0-9-3-5-1-6 5-3 9 2 3 6 4 9 3-5 4-18 3-19-9z" fill="#0f5fb0" />
              </svg>
              <div className="absolute bottom-[-3px] w-[6px] h-[3px] rounded-full bg-[#888]" />
            </div>
            <div className="w-[48px] h-[42px] flex items-center justify-center">
              <svg width="28" height="26" viewBox="0 0 28 26" aria-hidden>
                <path d="M1 2h9l3 3h14v20H1z" fill="#d99b18" />
                <rect x="1" y="7" width="26" height="19" rx="1" fill="#fbd24b" />
                <rect x="6" y="20" width="16" height="5" fill="#1a80d0" />
              </svg>
            </div>
            <div className="w-[48px] h-[42px] flex items-center justify-center">
              <svg width="26" height="26" viewBox="0 0 26 26" aria-hidden>
                <rect width="26" height="26" fill="#050505" />
                <path d="M8 4h4l3 10V4h3v18l-3 1-4-11v10l-3 1z" fill="#d81f26" />
              </svg>
            </div>
            <div className="w-[48px] h-[42px] flex items-center justify-center">
              <svg width="28" height="26" viewBox="0 0 28 26" aria-hidden>
                <polygon points="14,1 27,10 27,25 1,25 1,10" fill="#0f6fc0" />
                <polygon points="1,11 14,19 27,11 27,25 1,25" fill="#35b5ea" />
                <polygon points="5,9 14,3 23,9 14,15" fill="#f4f8fc" />
              </svg>
            </div>
            <div className="w-[48px] h-[42px] flex items-center justify-center">
              <svg width="26" height="26" viewBox="0 0 26 26" aria-hidden>
                <defs>
                  <linearGradient id="actA" x1="0" y1="0" x2="0" y2="1">
                    <stop offset="0" stopColor="#1ba0e8" />
                    <stop offset="1" stopColor="#6a24e8" />
                  </linearGradient>
                </defs>
                <rect width="26" height="26" fill="url(#actA)" />
                <path d="M11 6L5 20M17 6l-6 14M19 10v10h3z" stroke="#fff" strokeWidth="2" fill="#fff" />
              </svg>
            </div>
            <div className="relative w-[42px] mx-[3px] h-[42px] bg-[#f9f2f3] rounded-[4px] shadow-[0_0_1px_#bbb] flex items-center justify-center">
              <Logo s={27} />
              <div className="absolute bottom-[0px] w-[17px] h-[3px] rounded-full bg-[#0f78d0]" />
            </div>
            <div className="relative w-[48px] h-[42px] flex items-center justify-center">
              <svg width="26" height="28" viewBox="0 0 26 28" aria-hidden>
                <path d="M3 4c5-3 15-3 20 0v20c-5 3-15 3-20 0z" fill="#28505f" />
                <path d="M1 7c8-1 14-4 21-6-4 4-8 6-14 8zM8 13h11M8 17h11M8 21h11" stroke="#d6e2e8" strokeWidth="1.6" fill="#d6e2e8" />
              </svg>
              <div className="absolute bottom-[-3px] w-[6px] h-[3px] rounded-full bg-[#888]" />
            </div>
          </div>
        </div>

        <div className="ml-auto flex items-center pr-[21px] text-[#333]">
          <ChevronUp size={18} strokeWidth={1.4} />
          <svg className="ml-[8px]" width="18" height="14" viewBox="0 0 18 14" aria-hidden>
            <path d="M4 13a3.5 3.5 0 0 1-.5-7A5 5 0 0 1 13 5a4 4 0 0 1 1 8z" fill="#b8b4b4" stroke="#333" />
          </svg>
          <svg className="ml-[7px]" width="20" height="20" viewBox="0 0 20 20" aria-hidden>
            <path d="M3 9a7 7 0 0 1 12-4M15 2v3.5h-3.5M17 11a7 7 0 0 1-12 4M5 18v-3.5h3.5" fill="none" stroke="#444" />
            <circle cx="14" cy="15" r="4" fill="#f7980f" />
          </svg>
          <Wifi className="ml-[11px]" size={18} strokeWidth={1.5} />
          <Volume2 className="ml-[7px]" size={19} strokeWidth={1.3} />
          <svg className="ml-[7px]" width="19" height="14" viewBox="0 0 19 14" aria-hidden>
            <rect x="1" y="3" width="15" height="10" rx="2" fill="#333" />
            <rect x="16" y="6" width="2" height="4" fill="#333" />
            <path d="M6 0L3 6h3l-1 5 5-7H7z" fill="#333" stroke="#f6e6e8" strokeWidth=".7" />
          </svg>
          <div className="ml-[16px] text-right text-[12.5px] leading-[17px] text-[#444] whitespace-nowrap">
            <div>18:10</div>
            <div>19/03/2023</div>
          </div>
        </div>
      </div>
    </div>
  );
}
